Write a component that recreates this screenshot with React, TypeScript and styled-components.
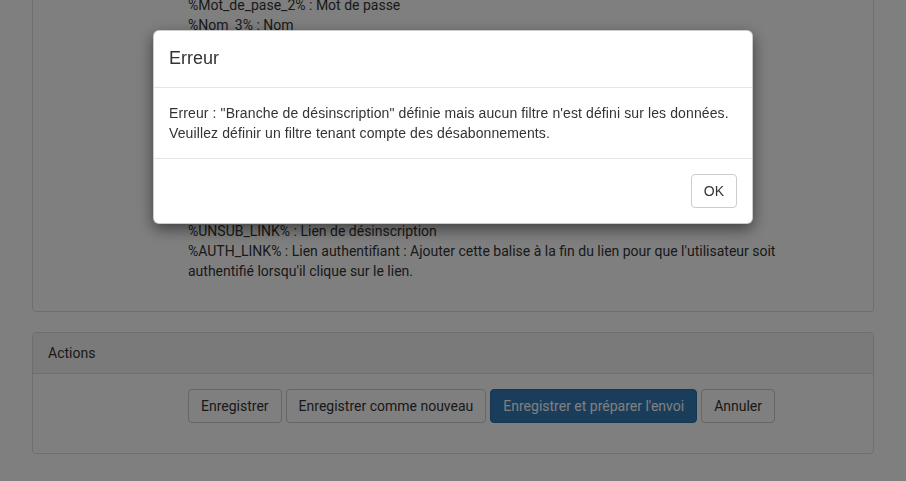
import React from "react";
import styled, { createGlobalStyle } from "styled-components";

const Global = createGlobalStyle`
  html, body { margin: 0; padding: 0; background: #fff; }
  body { font-family: Roboto, "Liberation Sans", Arial, sans-serif; font-size: 14px; line-height: 20px; color: #333; overflow: hidden; }
  * { box-sizing: border-box; }
`;

const Page = styled.div`
  margin: -21px 32px 0 32px;
  display: flex;
  flex-direction: column;
  gap: 20px;
`;

const Panel = styled.div`
  border: 1px solid #ddd;
  border-radius: 4px;
  background: #fff;
`;

const PanelHeading = styled.div`
  background: #f5f5f5;
  border-bottom: 1px solid #ddd;
  border-radius: 3px 3px 0 0;
  padding: 10px 15px;
  color: #333;
`;

const PanelBody = styled.div<{ $bottom?: number }>`
  padding: 15px 15px ${(p) => p.$bottom ?? 15}px 155px;
`;

const TagList = styled.div`
  max-width: 640px;
`;

const Line = styled.div<{ $gap?: number }>`
  margin-top: ${(p) => p.$gap ?? 0}px;
`;

const Buttons = styled.div`
  display: flex;
  gap: 4px;
  margin-bottom: 15px;
`;

const Btn = styled.button<{ $primary?: boolean }>`
  font-family: inherit;
  font-size: 14px;
  line-height: 20px;
  height: 34px;
  padding: 6px 12px;
  border-radius: 4px;
  border: 1px solid ${(p) => (p.$primary ? "#2e6da4" : "#ccc")};
  background: ${(p) => (p.$primary ? "#337ab7" : "#fff")};
  color: ${(p) => (p.$primary ? "#fff" : "#333")};
  cursor: pointer;
`;

const Backdrop = styled.div`
  position: fixed;
  inset: 0;
  background: rgba(0, 0, 0, 0.5);
  display: flex;
  justify-content: center;
  align-items: flex-start;
`;

const Dialog = styled.div`
  width: 600px;
  margin-top: 30px;
  background: #fff;
  border: 1px solid rgba(0, 0, 0, 0.2);
  border-radius: 6px;
  box-shadow: 0 5px 15px rgba(0, 0, 0, 0.5);
  font-family: "Liberation Sans", Arial, sans-serif;
  color: #333;
`;

const DialogHeader = styled.div`
  padding: 15px;
  border-bottom: 1px solid #e5e5e5;
`;

const DialogTitle = styled.h4`
  margin: 0;
  font-size: 18px;
  font-weight: 500;
  line-height: 1.42857;
`;

const DialogBody = styled.div`
  padding: 15px;
  font-size: 14px;
  line-height: 20px;
  letter-spacing: 0.11px;
`;

const DialogFooter = styled.div`
  padding: 15px;
  border-top: 1px solid #e5e5e5;
  display: flex;
  justify-content: flex-end;
`;

const OkBtn = styled(Btn)`
  font-family: "Liberation Sans", Arial, sans-serif;
`;

const hidden = [
  "%Prenom_4% : Prénom",
  "%Email_5% : Adresse e-mail",
  "%Societe_6% : Société",
  "%Ville_7% : Ville",
  "%Pays_8% : Pays",
  "%Telephone_9% : Téléphone",
  "%DATE% : Date du jour",
  "%VIEW_LINK% : Lien de visualisation",
  "%SHARE_LINK% : Lien de partage",
];

export default function App() {
  return (
    <>
      <Global />
      <Page>
        <Panel>
          <PanelBody $bottom={30}>
            <TagList>
              <Line>%Mot_de_pase_2% : Mot de passe</Line>
              <Line>%Nom_3% : Nom</Line>
              {hidden.map((h) => (
                <Line key={h}>{h}</Line>
              ))}
              <Line $gap={6}>%UNSUB_LINK% : Lien de désinscription</Line>
              <Line>
                %AUTH_LINK% : Lien authentifiant : Ajouter cette balise à la fin du lien pour que l'utilisateur soit
                authentifié lorsqu'il clique sur le lien.
              </Line>
            </TagList>
          </PanelBody>
        </Panel>
        <Panel>
          <PanelHeading>Actions</PanelHeading>
          <PanelBody>
            <Buttons>
              <Btn>Enregistrer</Btn>
              <Btn>Enregistrer comme nouveau</Btn>
              <Btn $primary>Enregistrer et préparer l'envoi</Btn>
              <Btn>Annuler</Btn>
            </Buttons>
          </PanelBody>
        </Panel>
      </Page>
      <Backdrop>
        <Dialog>
          <DialogHeader>
            <DialogTitle>Erreur</DialogTitle>
          </DialogHeader>
          <DialogBody>
            Erreur : "Branche de désinscription" définie mais aucun filtre n'est défini sur les données.
            <br />
            Veuillez définir un filtre tenant compte des désabonnements.
          </DialogBody>
          <DialogFooter>
            <OkBtn>OK</OkBtn>
          </DialogFooter>
        </Dialog>
      </Backdrop>
    </>
  );
}
